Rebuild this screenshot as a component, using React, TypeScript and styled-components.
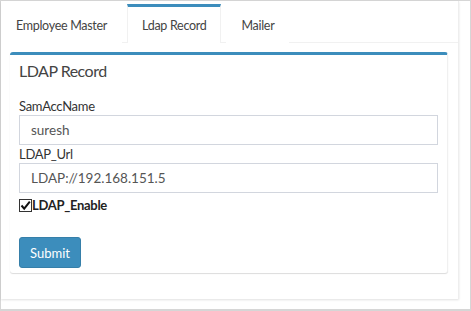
import { createGlobalStyle } from "styled-components";
import styled from "styled-components";

const GlobalStyle = createGlobalStyle`
  html, body {
    margin: 0;
    padding: 0;
    background: #fff;
  }
  body {
    font-family: Lato, "Open Sans", sans-serif;
    font-size: 13px;
    letter-spacing: -0.3px;
    color: #333;
  }
  * {
    box-sizing: border-box;
  }
`;

const Frame = styled.div`
  width: 471px;
  height: 311px;
  border: 1px solid #d6d6d6;
  border-bottom-width: 2px;
  background: #fff;
  padding: 0 11px 10px 0;
`;

const NavBox = styled.div`
  height: 100%;
  background: #fff;
  border-right: 1px solid #eee;
  box-shadow: 0 1px 2px rgba(0, 0, 0, 0.12);
`;

const TabBar = styled.ul`
  display: flex;
  list-style: none;
  margin: 0;
  padding: 0;
  height: 42px;
  border-bottom: 1px solid #f1f1f1;
`;

const Tab = styled.li<{ $active?: boolean }>`
  margin: 3px 5px -1px 0;
  border-top: 3px solid ${(p) => (p.$active ? "#3c8dbc" : "transparent")};
  border-left: 1px solid ${(p) => (p.$active ? "#f1f1f1" : "transparent")};
  border-right: 1px solid ${(p) => (p.$active ? "#f1f1f1" : "transparent")};
  background: #fff;
  padding: 0 14px;
  display: flex;
  align-items: center;
  color: #444;
  font-size: 12.5px;
  letter-spacing: -0.3px;
  cursor: pointer;
`;

const TabContent = styled.div`
  padding: 9px 10px 0 9px;
`;

const Box = styled.div`
  background: #fff;
  border-top: 3px solid #3c8dbc;
  border-radius: 3px;
  box-shadow: 0 1px 1px rgba(0, 0, 0, 0.14);
  border-right: 1px solid #f0f0f0;
`;

const BoxHeader = styled.div`
  padding: 5px 9px 15px;
`;

const BoxTitle = styled.h3`
  margin: 0;
  font-size: 16px;
  font-weight: normal;
  line-height: 22px;
  letter-spacing: -0.5px;
  color: #444;
`;

const BoxBody = styled.div`
  padding: 0 9px 5px;
`;

const Label = styled.label`
  display: block;
  font-size: 13px;
  line-height: 18px;
  padding-top: 1px;
  margin-top: -1px;
  color: #333;
`;

const Input = styled.input`
  display: block;
  width: 100%;
  height: 30px;
  padding: 4px 11px;
  border: 1px solid #d2d6de;
  border-radius: 0;
  font: inherit;
  font-size: 13.5px;
  letter-spacing: 0;
  color: #555;
  outline: none;
`;

const CheckRow = styled.label`
  display: flex;
  align-items: center;
  height: 20px;
  margin-top: 2px;
  font-weight: bold;
  font-size: 13px;
  color: #222;
`;

const CheckBox = styled.span`
  display: inline-flex;
  align-items: center;
  justify-content: center;
  width: 13px;
  height: 13px;
  border: 1px solid #333;
  background: #fff;
  svg {
    display: block;
  }
`;

const SubmitButton = styled.button`
  margin-top: 22px;
  width: 62px;
  height: 31px;
  background: #3c8dbc;
  border: 1px solid #367fa9;
  border-radius: 3px;
  color: #fff;
  font: inherit;
  font-size: 13px;
  cursor: pointer;
`;

export default function App() {
  return (
    <>
      <GlobalStyle />
      <Frame>
        <NavBox>
          <TabBar>
            <Tab>Employee Master</Tab>
            <Tab $active>Ldap Record</Tab>
            <Tab>Mailer</Tab>
          </TabBar>
          <TabContent>
            <Box>
              <BoxHeader>
                <BoxTitle>LDAP Record</BoxTitle>
              </BoxHeader>
              <BoxBody>
                <Label>SamAccName</Label>
                <Input defaultValue="suresh" />
                <Label>LDAP_Url</Label>
                <Input defaultValue="LDAP://192.168.151.5" />
                <CheckRow>
                  <CheckBox>
                    <svg width="11" height="11" viewBox="0 0 11 11">
                      <path
                        d="M1.5 5.5 L4.2 8.6 L9.8 1.6"
                        fill="none"
                        stroke="#111"
                        strokeWidth="2"
                      />
                    </svg>
                  </CheckBox>
                  LDAP_Enable
                </CheckRow>
                <SubmitButton type="button">Submit</SubmitButton>
              </BoxBody>
            </Box>
          </TabContent>
        </NavBox>
      </Frame>
    </>
  );
}
